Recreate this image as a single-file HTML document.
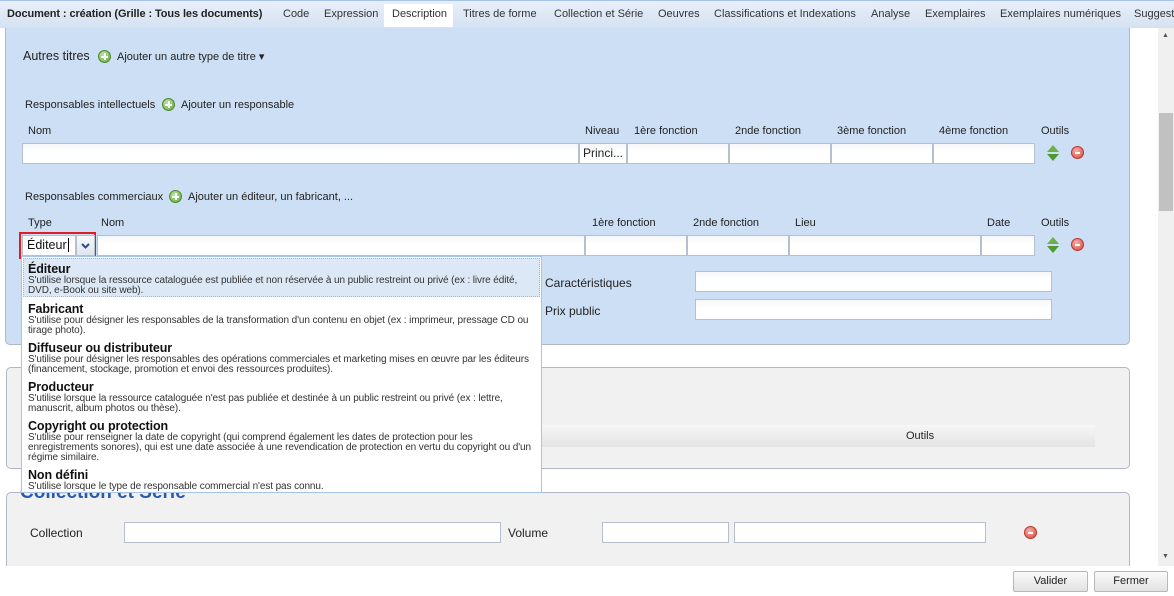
<!DOCTYPE html>
<html><head><meta charset="utf-8"><style>
*{box-sizing:border-box}
body{margin:0;width:1174px;height:596px;overflow:hidden;background:#fff;font-family:"Liberation Sans",Tahoma,sans-serif;font-size:11px;color:#222;position:relative}
.a{position:absolute;white-space:nowrap}
.tabs{left:0;top:0;width:1174px;height:28px;background:linear-gradient(#e8eff9,#d5e2f2);border-top:1px solid #a8c4ea}
.tab{position:absolute;top:7px;font-size:11px;color:#333}
.inp{position:absolute;height:21px;background:linear-gradient(#f4f6f8,#fff 40%);border:1px solid #b8bfcc}
.plus{position:absolute;width:13px;height:13px;border-radius:50%;background:radial-gradient(circle at 40% 35%,#bfe5a0,#5aa83a);border:1px solid #4a8a30}
.plus:before{content:"";position:absolute;left:2px;top:5px;width:7px;height:1.5px;background:#fff}
.plus:after{content:"";position:absolute;left:5px;top:2px;width:1.5px;height:7px;background:#fff}
.minus{position:absolute;width:13px;height:13px;border-radius:50%;background:radial-gradient(circle at 40% 35%,#f7b0a8,#d9453a);border:1px solid #b8362c}
.minus:after{content:"";position:absolute;left:3px;top:5px;width:5px;height:2px;background:#fff}
.arr{position:absolute;width:14px;height:18px}
.dd b{font-size:12.5px;display:block;color:#111;line-height:14px}
.it{position:absolute;left:6px;font-size:10px;line-height:10px;color:#333;white-space:normal;width:506px;letter-spacing:-0.1px}
</style></head><body>
<div class="a tabs">
<span class="tab" style="left:7px;font-weight:bold;color:#222;letter-spacing:-0.1px">Document : création (Grille : Tous les documents)</span>
<span class="tab" style="left:283px">Code</span>
<span class="tab" style="left:324px">Expression</span>
<div style="position:absolute;left:384px;top:3px;width:69px;height:23px;background:#fff"></div>
<span class="tab" style="left:392px">Description</span>
<span class="tab" style="left:463px">Titres de forme</span>
<span class="tab" style="left:554px">Collection et Série</span>
<span class="tab" style="left:658px">Oeuvres</span>
<span class="tab" style="left:714px">Classifications et Indexations</span>
<span class="tab" style="left:871px">Analyse</span>
<span class="tab" style="left:925px">Exemplaires</span>
<span class="tab" style="left:1000px">Exemplaires numériques</span>
<span class="tab" style="left:1134px">Suggest</span>
</div>
<div class="a" style="left:1158px;top:28px;width:16px;height:538px;background:#f0f0f0"></div>
<div class="a" style="left:1159px;top:113px;width:14px;height:98px;background:#c1c1c1"></div>
<div class="a" style="left:1162px;top:32px;font-size:7px;color:#555">▲</div>
<div class="a" style="left:1162px;top:553px;font-size:7px;color:#555">▼</div>
<div class="a" style="left:5px;top:28px;width:1125px;height:317px;background:#cddff4;border:1px solid #b1b7c6;border-top:none;border-radius:0 0 5px 5px"></div>
<div class="a" style="left:23px;top:49px;font-size:12.5px">Autres titres</div>
<div class="plus" style="left:98px;top:50px"></div>
<div class="a" style="left:117px;top:50px">Ajouter un autre type de titre ▾</div>
<div class="a" style="left:25px;top:99px">Responsables intellectuels</div>
<div class="plus" style="left:162px;top:98px"></div>
<div class="a" style="left:181px;top:99px">Ajouter un responsable</div>
<div class="a" style="left:28px;top:125px">Nom</div>
<div class="a" style="left:585px;top:125px">Niveau</div>
<div class="a" style="left:634px;top:125px">1ère fonction</div>
<div class="a" style="left:735px;top:125px">2nde fonction</div>
<div class="a" style="left:837px;top:125px">3ème fonction</div>
<div class="a" style="left:939px;top:125px">4ème fonction</div>
<div class="a" style="left:1041px;top:125px">Outils</div>
<div class="inp" style="left:22px;top:143px;width:557px"></div>
<div class="inp" style="left:579px;top:143px;width:48px;padding:2px 0 0 3px;font-size:12px">Princi...</div>
<div class="inp" style="left:627px;top:143px;width:102px"></div>
<div class="inp" style="left:729px;top:143px;width:102px"></div>
<div class="inp" style="left:831px;top:143px;width:102px"></div>
<div class="inp" style="left:933px;top:143px;width:102px"></div>
<svg class="arr" style="left:1046px;top:144px" viewBox="0 0 14 18"><path d="M7 1L13 8H1Z" fill="#6cb048"/><path d="M7 17L13 10H1Z" fill="#4e9a30"/></svg>
<div class="minus" style="left:1071px;top:146px"></div>
<div class="a" style="left:25px;top:191px">Responsables commerciaux</div>
<div class="plus" style="left:169px;top:190px"></div>
<div class="a" style="left:188px;top:191px">Ajouter un éditeur, un fabricant, ...</div>
<div class="a" style="left:28px;top:217px">Type</div>
<div class="a" style="left:101px;top:217px">Nom</div>
<div class="a" style="left:592px;top:217px">1ère fonction</div>
<div class="a" style="left:693px;top:217px">2nde fonction</div>
<div class="a" style="left:795px;top:217px">Lieu</div>
<div class="a" style="left:987px;top:217px">Date</div>
<div class="a" style="left:1041px;top:217px">Outils</div>
<div class="inp" style="left:97px;top:235px;width:488px"></div>
<div class="inp" style="left:585px;top:235px;width:102px"></div>
<div class="inp" style="left:687px;top:235px;width:102px"></div>
<div class="inp" style="left:789px;top:235px;width:192px"></div>
<div class="inp" style="left:981px;top:235px;width:54px"></div>
<svg class="arr" style="left:1046px;top:236px" viewBox="0 0 14 18"><path d="M7 1L13 8H1Z" fill="#6cb048"/><path d="M7 17L13 10H1Z" fill="#4e9a30"/></svg>
<div class="minus" style="left:1071px;top:238px"></div>
<div class="a" style="left:19px;top:232px;width:77px;height:27px;border:2px solid #e01c24"></div>
<div class="inp" style="left:22px;top:235px;width:54px;padding:2px 0 0 4px;font-size:12.5px;color:#111">Éditeur<span style="border-left:1px solid #000;margin-left:1px"></span></div>
<div class="a" style="left:76px;top:235px;width:19px;height:21px;background:linear-gradient(#f6f8fb,#dfe6ef);border:1px solid #b8bfcc"><svg width="17" height="19" viewBox="0 0 17 19"><path d="M5 8l3.5 3.5L12 8" stroke="#2a4a8a" stroke-width="2" fill="none"/></svg></div>
<div class="a" style="left:545px;top:276px;font-size:12px">Caractéristiques</div>
<div class="inp" style="left:695px;top:271px;width:357px"></div>
<div class="a" style="left:545px;top:304px;font-size:12px">Prix public</div>
<div class="inp" style="left:695px;top:299px;width:357px"></div>
<div class="a" style="left:6px;top:367px;width:1124px;height:102px;background:#f1f1f1;border:1px solid #b1b7c6;border-radius:5px"></div>
<div class="a" style="left:22px;top:425px;width:1073px;height:22px;background:linear-gradient(#f6f6f6,#e5e4e4)"></div>
<div class="a" style="left:906px;top:430px">Outils</div>
<div class="a" style="left:6px;top:492px;width:1124px;height:90px;background:#f1f1f1;border:1px solid #b1b7c6;border-radius:5px"></div>
<div class="a" style="left:20px;top:482px;font-size:19px;font-weight:bold;color:#2a5aa8">Collection et Série</div>
<div class="a" style="left:30px;top:526px;font-size:12px">Collection</div>
<div class="inp" style="left:124px;top:522px;width:377px;background:#fff"></div>
<div class="a" style="left:508px;top:526px;font-size:12px">Volume</div>
<div class="inp" style="left:602px;top:522px;width:127px;background:#fff"></div>
<div class="inp" style="left:734px;top:522px;width:252px;background:#fff"></div>
<div class="minus" style="left:1024px;top:526px"></div>
<div class="a" style="left:0;top:566px;width:1174px;height:30px;background:#fff"></div>
<div class="a" style="left:1013px;top:571px;width:75px;height:21px;border:1px solid #b8b8b8;border-radius:2px;background:linear-gradient(#fafafa,#e2e2e2);text-align:center;line-height:19px">Valider</div>
<div class="a" style="left:1094px;top:571px;width:74px;height:21px;border:1px solid #b8b8b8;border-radius:2px;background:linear-gradient(#fafafa,#e2e2e2);text-align:center;line-height:19px">Fermer</div>
<div class="a dd" style="left:21px;top:256px;width:521px;height:237px;background:#fff;border:1px solid #a6c4ec">
<div style="position:absolute;left:1px;top:1px;width:517px;height:39px;background:#dde8f6;border:1px dotted #9ab8e0"></div>
<div class="it" style="top:5px"><b>Éditeur</b>S'utilise lorsque la ressource cataloguée est publiée et non réservée à un public restreint ou privé (ex : livre édité, DVD, e-Book ou site web).</div>
<div class="it" style="top:45px"><b>Fabricant</b>S'utilise pour désigner les responsables de la transformation d'un contenu en objet (ex : imprimeur, pressage CD ou tirage photo).</div>
<div class="it" style="top:84px"><b>Diffuseur ou distributeur</b>S'utilise pour désigner les responsables des opérations commerciales et marketing mises en œuvre par les éditeurs (financement, stockage, promotion et envoi des ressources produites).</div>
<div class="it" style="top:123px"><b>Producteur</b>S'utilise lorsque la ressource cataloguée n'est pas publiée et destinée à un public restreint ou privé (ex : lettre, manuscrit, album photos ou thèse).</div>
<div class="it" style="top:162px"><b>Copyright ou protection</b>S'utilise pour renseigner la date de copyright (qui comprend également les dates de protection pour les enregistrements sonores), qui est une date associée à une revendication de protection en vertu du copyright ou d'un régime similaire.</div>
<div class="it" style="top:211px"><b>Non défini</b>S'utilise lorsque le type de responsable commercial n'est pas connu.</div>
</div>
</body></html>
